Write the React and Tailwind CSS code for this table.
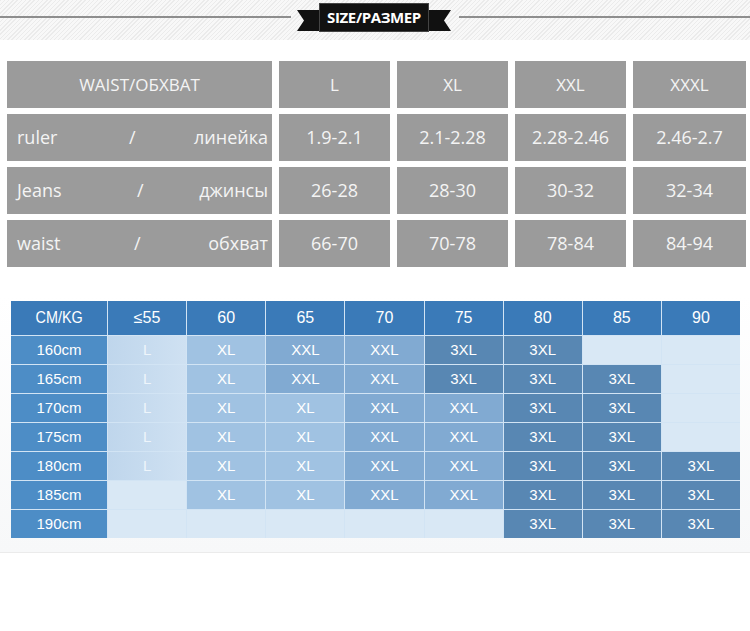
import React from 'react';

const grayRows = [
  { en: 'ruler', ru: 'линейка', w: 'w-[112px]', vals: ['1.9-2.1', '2.1-2.28', '2.28-2.46', '2.46-2.7'] },
  { en: 'Jeans', ru: 'джинсы', w: 'w-[120px]', vals: ['26-28', '28-30', '30-32', '32-34'] },
  { en: 'waist', ru: 'обхват', w: 'w-[117px]', vals: ['66-70', '70-78', '78-84', '84-94'] },
];

const weights = ['≤55', '60', '65', '70', '75', '80', '85', '90'];

const heights = [
  { h: '160cm', s: ['L', 'XL', 'XXL', 'XXL', '3XL', '3XL', '', ''] },
  { h: '165cm', s: ['L', 'XL', 'XXL', 'XXL', '3XL', '3XL', '3XL', ''] },
  { h: '170cm', s: ['L', 'XL', 'XL', 'XXL', 'XXL', '3XL', '3XL', ''] },
  { h: '175cm', s: ['L', 'XL', 'XL', 'XXL', 'XXL', '3XL', '3XL', ''] },
  { h: '180cm', s: ['L', 'XL', 'XL', 'XXL', 'XXL', '3XL', '3XL', '3XL'] },
  { h: '185cm', s: ['', 'XL', 'XL', 'XXL', 'XXL', '3XL', '3XL', '3XL'] },
  { h: '190cm', s: ['', '', '', '', '', '3XL', '3XL', '3XL'] },
];

// cell fill per size
const fill = {
  '': 'bg-[#d9e8f5]',
  L: 'bg-gradient-to-r from-[#bfd6ec] to-[#cfe1f2]',
  XL: 'bg-[#a0c2e2]',
  XXL: 'bg-[#81aad2]',
  '3XL': 'bg-[#5887b3]',
};

const GrayCell = ({ children, className = '' }) => (
  <div className={`bg-[#9b9b9b] h-[47px] flex items-center justify-center text-[#f4f4f4] ${className}`}>
    {children}
  </div>
);

const App = () => {
  return (
    <div className="w-[750px] h-[631px] bg-white overflow-hidden" style={{ fontFamily: '"Open Sans", "Noto Sans", sans-serif' }}>
      {/* title band */}
      <div className="h-[40px] relative flex items-center bg-[repeating-linear-gradient(135deg,#ebebeb_0px,#ebebeb_1px,#f8f8f8_1px,#f8f8f8_3px)]">
        <div className="flex-1 h-[2px] bg-[#8e8e8e] -mt-[6px]" />
        <div className="flex items-center ml-[6px] mr-[8px] -mt-[5px]">
          <svg width="22" height="21" viewBox="0 0 22 21" className="mt-[6px]">
            <polygon points="0,0 22,0 22,21 0,21 7,10.5" fill="#111" />
          </svg>
          <div className="bg-[#111] h-[29px] w-[110px] flex items-center justify-center border border-[#444] text-white font-bold text-[15px] tracking-tight">
            SIZE/РАЗМЕР
          </div>
          <svg width="22" height="21" viewBox="0 0 22 21" className="mt-[6px]">
            <polygon points="0,0 22,0 15,10.5 22,21 0,21" fill="#111" />
          </svg>
        </div>
        <div className="flex-1 h-[2px] bg-[#8e8e8e] -mt-[6px]" />
      </div>

      {/* gray waist table */}
      <div className="pl-[7px] pt-[21px] grid grid-cols-[265px_111px_111px_111px_113px] gap-x-[7px] gap-y-[6px] font-medium">
        <GrayCell className="text-[17px]">WAIST/ОБХВАТ</GrayCell>
        <GrayCell className="text-[17px]">L</GrayCell>
        <GrayCell className="text-[17px]">XL</GrayCell>
        <GrayCell className="text-[17px]">XXL</GrayCell>
        <GrayCell className="text-[17px]">XXXL</GrayCell>
        {grayRows.map((r) => (
          <React.Fragment key={r.en}>
            <GrayCell className="!justify-start pl-[10px] pr-[4px] text-[18px]">
              <span className={r.w}>{r.en}</span>
              <span>/</span>
              <span className="flex-1 text-right">{r.ru}</span>
            </GrayCell>
            {r.vals.map((v) => (
              <GrayCell key={v} className="text-[18px]">{v}</GrayCell>
            ))}
          </React.Fragment>
        ))}
      </div>

      {/* blue height/weight table */}
      <div className="mt-[28px] pt-[6px] pb-[14px] border-b border-[#ebebeb] bg-gradient-to-b from-white to-[#f7f8f9]">
        <div
          className="ml-[11px] w-[729px] grid grid-cols-[96px_repeat(8,1fr)] gap-px bg-[#d2e4f4] text-white"
          style={{ fontFamily: '"Liberation Sans", Arial, sans-serif' }}
        >
          <div className="h-[34px] bg-[#3a7ab8] flex items-center justify-center text-[16px]">
            <span className="inline-block scale-x-90">CM/KG</span>
          </div>
          {weights.map((w) => (
            <div key={w} className="h-[34px] bg-[#3a7ab8] flex items-center justify-center text-[16px]">{w}</div>
          ))}
          {heights.map((row) => (
            <React.Fragment key={row.h}>
              <div className="h-[28px] bg-[#4d8dc6] flex items-center justify-center text-[15px]">{row.h}</div>
              {row.s.map((s, i) => (
                <div key={i} className={`h-[28px] ${fill[s]} flex items-center justify-center text-[15px] ${s === 'L' ? 'text-[#eef5fb]' : 'text-white'}`}>
                  {s}
                </div>
              ))}
            </React.Fragment>
          ))}
        </div>
      </div>
    </div>
  );
};

export default App;
